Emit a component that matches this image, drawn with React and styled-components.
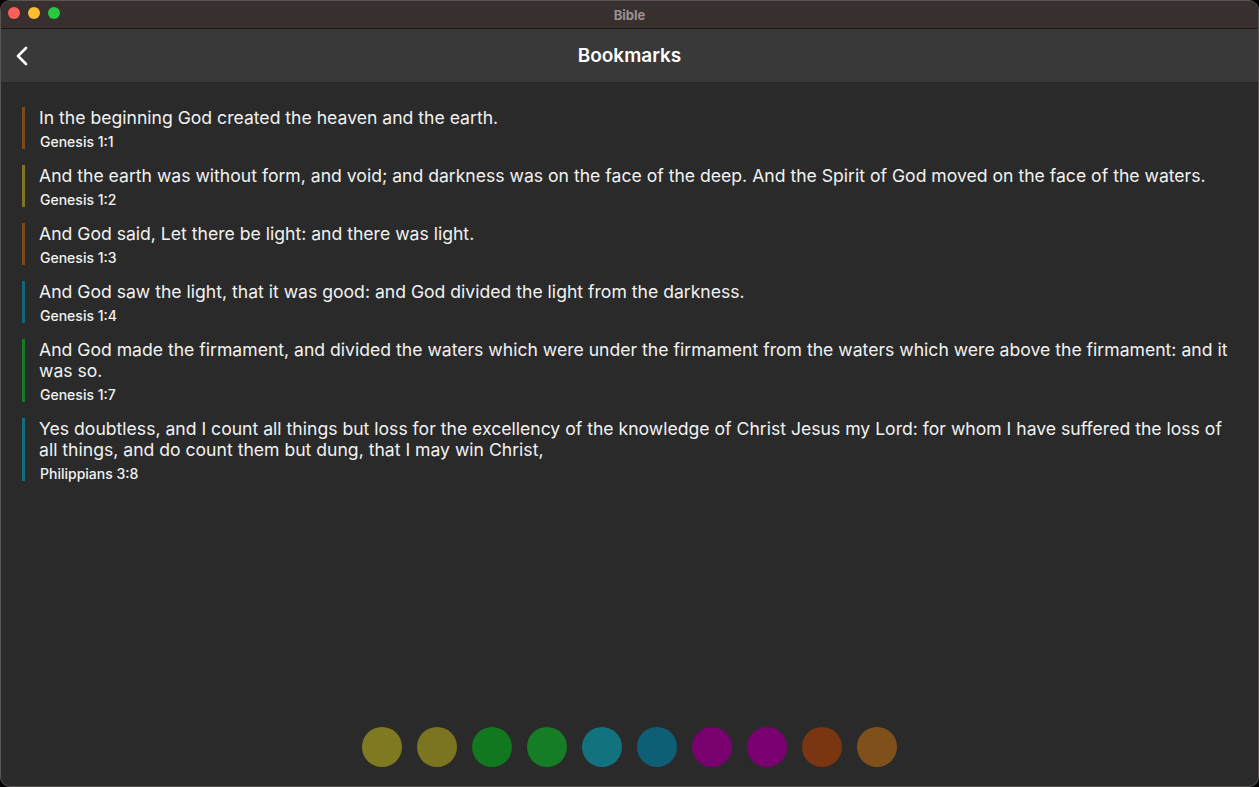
import styled, { createGlobalStyle } from "styled-components";

const GlobalStyle = createGlobalStyle`
  html, body {
    margin: 0;
    padding: 0;
    background: #000;
  }
  body {
    font-family: Inter, "Noto Sans", "Liberation Sans", sans-serif;
    -webkit-font-smoothing: antialiased;
  }
`;

const Window = styled.div`
  width: 1259px;
  height: 787px;
  box-sizing: border-box;
  border: 1px solid #5a5555;
  border-radius: 10px;
  overflow: hidden;
  display: flex;
  flex-direction: column;
  background: #2a2a2a;
`;

const TitleBar = styled.div`
  height: 27px;
  flex: none;
  background: #382f2f;
  border-bottom: 1px solid #1e1a1a;
  display: flex;
  align-items: center;
  justify-content: center;
  position: relative;
  color: #9b9292;
  font-size: 13px;
  font-weight: 700;
`;

const Lights = styled.div`
  position: absolute;
  left: 7px;
  top: 6px;
  display: flex;
  gap: 8px;
`;

const Light = styled.span`
  width: 12px;
  height: 12px;
  border-radius: 50%;
  background: ${(p) => p.$color};
`;

const Header = styled.header`
  height: 53px;
  flex: none;
  background: #393939;
  border-bottom: 1px solid #262626;
  display: flex;
  align-items: center;
  justify-content: center;
  position: relative;
`;

const BackButton = styled.button`
  position: absolute;
  left: 12px;
  top: 50%;
  transform: translateY(-50%);
  background: none;
  border: none;
  padding: 0;
  display: flex;
  color: #fff;
`;

const Title = styled.h1`
  margin: 0;
  color: #fff;
  font-size: 19px;
  font-weight: 600;
`;

const List = styled.div`
  flex: 1;
  display: flex;
  flex-direction: column;
  gap: 16px;
  padding: 24px 20px 0 21px;
`;

const Row = styled.div`
  display: flex;
  gap: 14px;
`;

const Bar = styled.div`
  width: 3px;
  flex: none;
  background: ${(p) => p.$color};
`;

const Content = styled.div`
  display: flex;
  flex-direction: column;
`;

const Verse = styled.div`
  color: #f2f2f2;
  font-size: 17.6px;
  line-height: 21px;
`;

const Ref = styled.div`
  color: #f2f2f2;
  font-size: 14px;
  font-weight: 500;
  line-height: 15px;
  padding-top: 6px;
  padding-left: 1px;
`;

const Palette = styled.div`
  flex: none;
  display: flex;
  justify-content: center;
  gap: 15px;
  padding-bottom: 19px;
`;

const Dot = styled.span`
  width: 40px;
  height: 40px;
  border-radius: 50%;
  background: ${(p) => p.$color};
`;

const bookmarks = [
  {
    color: "#7a4a1a",
    text: "In the beginning God created the heaven and the earth.",
    ref: "Genesis 1:1",
  },
  {
    color: "#7d7624",
    text: "And the earth was without form, and void; and darkness was on the face of the deep. And the Spirit of God moved on the face of the waters.",
    ref: "Genesis 1:2",
  },
  {
    color: "#7a4a1a",
    text: "And God said, Let there be light: and there was light.",
    ref: "Genesis 1:3",
  },
  {
    color: "#136579",
    text: "And God saw the light, that it was good: and God divided the light from the darkness.",
    ref: "Genesis 1:4",
  },
  {
    color: "#157a22",
    text: "And God made the firmament, and divided the waters which were under the firmament from the waters which were above the firmament: and it was so.",
    ref: "Genesis 1:7",
  },
  {
    color: "#136d7a",
    text: "Yes doubtless, and I count all things but loss for the excellency of the knowledge of Christ Jesus my Lord: for whom I have suffered the loss of all things, and do count them but dung, that I may win Christ,",
    ref: "Philippians 3:8",
  },
];

const colors = [
  "#7f7a22",
  "#7b7420",
  "#12781f",
  "#147d26",
  "#12727e",
  "#0e5f76",
  "#79006f",
  "#7a0071",
  "#7a3511",
  "#80501b",
];

export default function App() {
  return (
    <>
      <GlobalStyle />
      <Window>
        <TitleBar>
          <Lights>
            <Light $color="#fe5f57" />
            <Light $color="#febc2e" />
            <Light $color="#28c840" />
          </Lights>
          Bible
        </TitleBar>
        <Header>
          <BackButton aria-label="Back">
            <svg width="20" height="22" viewBox="0 0 20 22" fill="none">
              <path
                d="M13 3 L5 11 L13 19"
                stroke="#fff"
                strokeWidth="2.6"
                strokeLinecap="round"
                strokeLinejoin="round"
              />
            </svg>
          </BackButton>
          <Title>Bookmarks</Title>
        </Header>
        <List>
          {bookmarks.map((b) => (
            <Row key={b.ref}>
              <Bar $color={b.color} />
              <Content>
                <Verse>{b.text}</Verse>
                <Ref>{b.ref}</Ref>
              </Content>
            </Row>
          ))}
        </List>
        <Palette>
          {colors.map((c, i) => (
            <Dot key={i} $color={c} />
          ))}
        </Palette>
      </Window>
    </>
  );
}
